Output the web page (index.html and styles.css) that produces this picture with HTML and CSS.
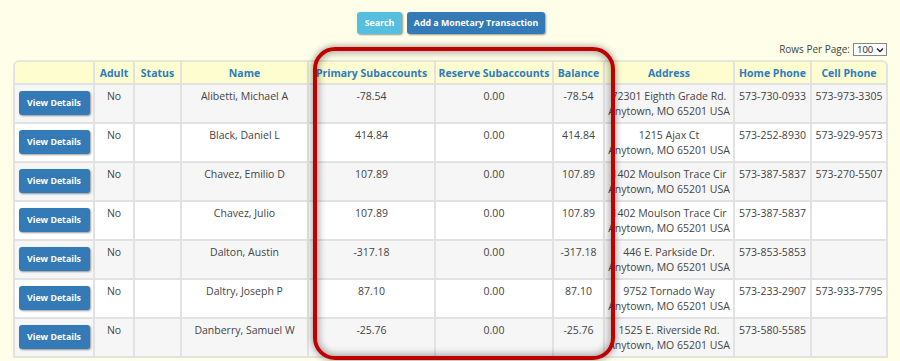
FILE: index.html
```html
<!DOCTYPE html>
<html>
<head>
<meta charset="utf-8">
<link rel="stylesheet" href="styles.css">
</head>
<body>
<div class="page">
  <div class="actions">
    <button class="btn btn-info">Search</button>
    <button class="btn btn-primary btn-wide">Add a Monetary Transaction</button>
  </div>
  <div class="rpp">
    <span>Rows Per Page:</span>
    <span class="rpp-wrap">
      <select class="rpp-select"><option>100</option></select>
      <svg class="chev" width="8" height="6" viewBox="0 0 8 6"><path d="M1 1.5 L4 4.5 L7 1.5" fill="none" stroke="#222" stroke-width="1.4"/></svg>
    </span>
  </div>
  <table class="grid">
    <colgroup>
      <col style="width:82px"><col style="width:40px"><col style="width:47px"><col style="width:127px"><col style="width:127px"><col style="width:118px"><col style="width:51px"><col style="width:130px"><col style="width:77px"><col style="width:76px">
    </colgroup>
    <thead>
      <tr><th></th><th>Adult</th><th>Status</th><th>Name</th><th>Primary Subaccounts</th><th>Reserve Subaccounts</th><th>Balance</th><th>Address</th><th>Home Phone</th><th>Cell Phone</th></tr>
    </thead>
    <tbody>
      <tr><td><button class="btn btn-primary btn-sm">View Details</button></td><td>No</td><td></td><td>Alibetti, Michael A</td><td>-78.54</td><td>0.00</td><td>-78.54</td><td class="addr">72301 Eighth Grade Rd.<br>Anytown, MO 65201 USA</td><td>573-730-0933</td><td>573-973-3305</td></tr>
      <tr><td><button class="btn btn-primary btn-sm">View Details</button></td><td>No</td><td></td><td>Black, Daniel L</td><td>414.84</td><td>0.00</td><td>414.84</td><td class="addr">1215 Ajax Ct<br>Anytown, MO 65201 USA</td><td>573-252-8930</td><td>573-929-9573</td></tr>
      <tr><td><button class="btn btn-primary btn-sm">View Details</button></td><td>No</td><td></td><td>Chavez, Emilio D</td><td>107.89</td><td>0.00</td><td>107.89</td><td class="addr">1402 Moulson Trace Cir<br>Anytown, MO 65201 USA</td><td>573-387-5837</td><td>573-270-5507</td></tr>
      <tr><td><button class="btn btn-primary btn-sm">View Details</button></td><td>No</td><td></td><td>Chavez, Julio</td><td>107.89</td><td>0.00</td><td>107.89</td><td class="addr">1402 Moulson Trace Cir<br>Anytown, MO 65201 USA</td><td>573-387-5837</td><td></td></tr>
      <tr><td><button class="btn btn-primary btn-sm">View Details</button></td><td>No</td><td></td><td>Dalton, Austin</td><td>-317.18</td><td>0.00</td><td>-317.18</td><td class="addr">446 E. Parkside Dr.<br>Anytown, MO 65201 USA</td><td>573-853-5853</td><td></td></tr>
      <tr><td><button class="btn btn-primary btn-sm">View Details</button></td><td>No</td><td></td><td>Daltry, Joseph P</td><td>87.10</td><td>0.00</td><td>87.10</td><td class="addr">9752 Tornado Way<br>Anytown, MO 65201 USA</td><td>573-233-2907</td><td>573-933-7795</td></tr>
      <tr><td><button class="btn btn-primary btn-sm">View Details</button></td><td>No</td><td></td><td>Danberry, Samuel W</td><td>-25.76</td><td>0.00</td><td>-25.76</td><td class="addr">1525 E. Riverside Rd.<br>Anytown, MO 65201 USA</td><td>573-580-5585</td><td></td></tr>
    </tbody>
  </table>
  <div class="highlight"></div>
</div>
</body>
</html>
```

FILE: styles.css
```css
html, body {
  margin: 0;
  padding: 0;
  background: #fefee9;
}
body {
  padding: 8px;
  font-family: "Open Sans", "Noto Sans", sans-serif;
  font-size: 10.5px;
  color: #444;
}
.page {
  position: relative;
  padding: 0 5px;
}
.actions {
  display: flex;
  justify-content: center;
  gap: 5px;
  padding-top: 4px;
  padding-left: 2px;
}
.btn {
  border: none;
  border-radius: 3px;
  color: #fff;
  font-family: "Open Sans", "Noto Sans", sans-serif;
  font-weight: 700;
  font-size: 8.8px;
  padding: 0;
  height: 22px;
  box-shadow: 1px 1px 2px rgba(0,0,0,0.4);
  cursor: pointer;
  white-space: nowrap;
}
.btn-info {
  background: #56bfe0;
  width: 45px;
}
.btn-primary {
  background: #337ab7;
}
.btn-wide {
  width: 138px;
}
.rpp {
  display: flex;
  justify-content: flex-end;
  align-items: center;
  gap: 3px;
  margin-top: 9px;
  height: 12px;
  font-size: 10px;
  color: #444;
}
.rpp-wrap {
  position: relative;
  display: inline-flex;
}
.rpp-select {
  -webkit-appearance: none;
  appearance: none;
  font-size: 9.5px;
  line-height: 11px;
  height: 13px;
  width: 34px;
  padding: 0 0 0 3px;
  border: 1px solid #888;
  border-radius: 0;
  background: #fff;
  color: #222;
  font-family: "Open Sans", sans-serif;
}
.chev {
  position: absolute;
  right: 3px;
  top: 4px;
  pointer-events: none;
}
.grid {
  margin-top: 5px;
  width: 875px;
  table-layout: fixed;
  border-collapse: separate;
  border-spacing: 0;
  border-radius: 6px 6px 0 0;
}
.grid th, .grid td {
  border-right: 2px solid #e2e2e2;
  border-bottom: 2px solid #e2e2e2;
  text-align: center;
  vertical-align: top;
  overflow: hidden;
  white-space: nowrap;
}
.grid th:first-child, .grid td:first-child {
  border-left: 2px solid #e2e2e2;
}
.grid th {
  background: #fdfdd0;
  color: #2d7bbd;
  font-weight: 700;
  font-size: 10.5px;
  height: 21px;
  padding: 0 1px;
  vertical-align: middle;
  border-top: 2px solid #e8e8d8;
}
.grid th:first-child {
  border-top-left-radius: 6px;
}
.grid th:last-child {
  border-top-right-radius: 6px;
}
.grid td {
  line-height: 15px;
  padding: 4px 2px 3px;
  height: 30px;
}
.grid tbody tr:nth-child(odd) td {
  background: #f6f6f6;
}
.grid tbody tr:nth-child(even) td {
  background: #ffffff;
}
.grid td.addr {
  padding-left: 0;
  padding-right: 0;
}
.btn-sm {
  height: 24px;
  width: 71px;
  font-size: 8.8px;
  margin-top: 2px;
}
.highlight {
  position: absolute;
  left: 305px;
  top: 39px;
  width: 302px;
  height: 313px;
  box-sizing: border-box;
  border: 4px solid #bf0000;
  border-radius: 22px;
  box-shadow: 0 0 6px 1px rgba(0,0,0,0.35), inset 0 0 7px 2px rgba(0,0,0,0.32);
  pointer-events: none;
}
```
